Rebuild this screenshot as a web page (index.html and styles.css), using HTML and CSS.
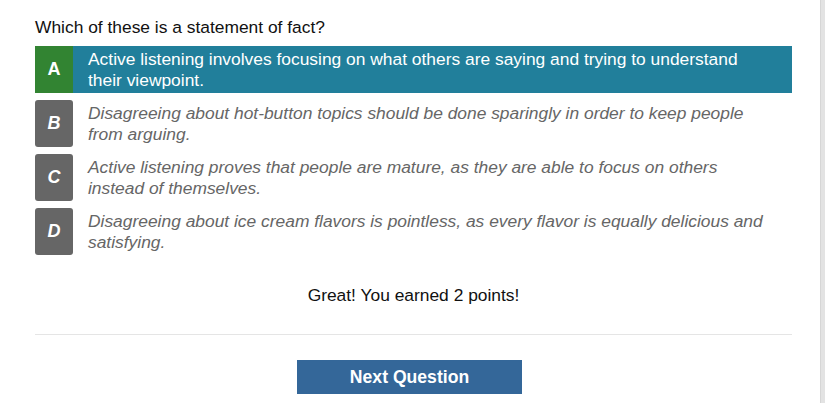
FILE: index.html
```html
<!DOCTYPE html>
<html>
<head>
<meta charset="utf-8">
<link rel="stylesheet" href="styles.css">
</head>
<body>
<div class="page">
  <main class="quiz">
    <p class="question">Which of these is a statement of fact?</p>
    <ul class="options">
      <li class="option selected">
        <span class="letter correct">A</span>
        <span class="text">Active listening involves focusing on what others are saying and trying to understand their viewpoint.</span>
      </li>
      <li class="option">
        <span class="letter">B</span>
        <span class="text">Disagreeing about hot-button topics should be done sparingly in order to keep people from arguing.</span>
      </li>
      <li class="option">
        <span class="letter">C</span>
        <span class="text">Active listening proves that people are mature, as they are able to focus on others instead of themselves.</span>
      </li>
      <li class="option">
        <span class="letter">D</span>
        <span class="text">Disagreeing about ice cream flavors is pointless, as every flavor is equally delicious and satisfying.</span>
      </li>
    </ul>
    <p class="feedback">Great! You earned 2 points!</p>
    <hr class="divider">
    <div class="actions">
      <button class="next">Next Question</button>
    </div>
  </main>
  <div class="scrollbar"></div>
</div>
</body>
</html>
```
FILE: styles.css
```css
html, body {
  margin: 0;
  padding: 0;
  background: #ffffff;
}
body {
  font-family: "Liberation Sans", Arial, sans-serif;
  color: #111;
  height: 403px;
  overflow: hidden;
}
.page {
  display: flex;
  height: 403px;
}
.quiz {
  flex: 1;
  padding-left: 35px;
  padding-right: 28px;
}
.scrollbar {
  width: 4px;
  background: #e3e3e3;
  border-left: 1px solid #d6d6d6;
}
.question {
  margin: 17px 0 0;
  font-size: 17.4px;
  line-height: 20px;
  color: #111;
}
.options {
  list-style: none;
  margin: 9px 0 0;
  padding: 0;
  display: flex;
  flex-direction: column;
  gap: 7px;
}
.option {
  display: flex;
  align-items: stretch;
  min-height: 47px;
}
.option.selected {
  background: #217f9b;
}
.letter {
  width: 38px;
  flex: none;
  display: flex;
  align-items: center;
  justify-content: center;
  background: #666666;
  color: #fff;
  font-weight: bold;
  font-style: italic;
  font-size: 18px;
  border-radius: 3px;
}
.letter.correct {
  background: #328432;
  font-style: normal;
  border-radius: 0;
}
.text {
  flex: 1;
  padding: 3px 20px 3px 15px;
  font-size: 17.4px;
  line-height: 20.5px;
  font-style: italic;
  color: #666;
  display: flex;
  align-items: center;
}
.selected .text {
  font-style: normal;
  color: #fff;
}
.feedback {
  margin: 30px 0 0;
  text-align: center;
  font-size: 17.4px;
  line-height: 20px;
  color: #111;
}
.divider {
  margin: 29px 0 0;
  border: 0;
  border-top: 1px solid #e5e5e5;
}
.actions {
  display: flex;
  justify-content: center;
  margin-top: 25px;
}
.next {
  width: 225px;
  height: 34px;
  border: 0;
  background: #346799;
  color: #fff;
  font-family: "Liberation Sans", Arial, sans-serif;
  font-weight: bold;
  font-size: 17.6px;
  padding: 0;
  margin-left: -8px;
}
```
